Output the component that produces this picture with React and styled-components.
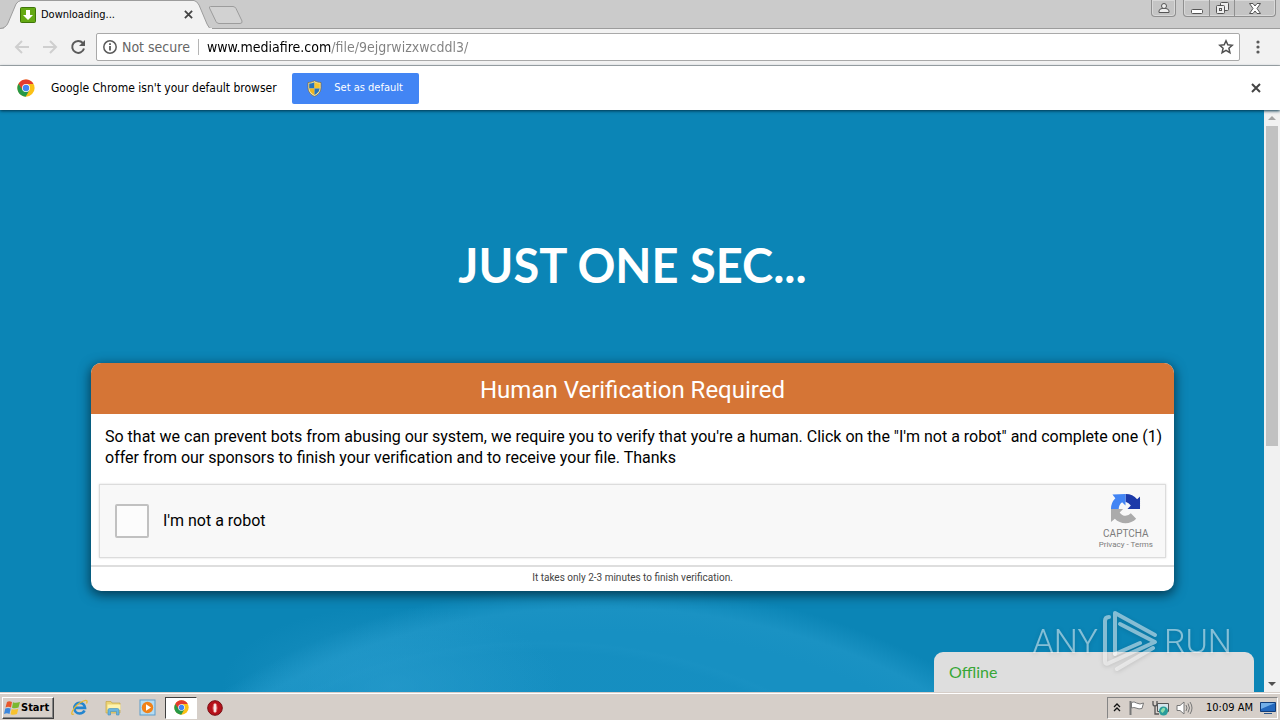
import React from "react";
import styled, { createGlobalStyle } from "styled-components";

const ui = `"DejaVu Sans Condensed", "Noto Sans", sans-serif`;

const GlobalStyle = createGlobalStyle`
  * { box-sizing: border-box; }
  body { margin: 0; font-family: Roboto, sans-serif; color: #000; }
  button, input { font: inherit; color: inherit; }
  button { padding: 0; border: 0; background: none; cursor: pointer; }
  svg { display: block; flex: none; }
`;

const Desktop = styled.div`
  display: flex;
  flex-direction: column;
  min-height: 100vh;
  overflow: hidden;
`;

const TabStrip = styled.div`
  display: flex;
  align-items: flex-start;
  justify-content: space-between;
  height: 29px;
  background: #cbcbcb;
  border-bottom: 1px solid #9c9c9c;
`;

const Tabs = styled.div`
  display: flex;
  align-items: flex-start;
`;

const Tab = styled.div`
  position: relative;
  display: flex;
  align-items: center;
  gap: 5px;
  width: 208px;
  height: 29px;
  padding: 0 12px 0 20px;
  font: 11px/16px ${ui};
`;

const TabShape = styled.svg`
  position: absolute;
  inset: 0;
  z-index: 0;
`;

const TabTitle = styled.span`
  position: relative;
  flex: 1;
`;

const TabIcon = styled.svg`
  position: relative;
`;

const IconButton = styled.button`
  position: relative;
  display: grid;
  place-items: center;
  width: ${(p) => p.$w || 16}px;
  height: ${(p) => p.$h || 16}px;
`;

const WindowButtons = styled.div`
  display: flex;
  gap: 7px;
  padding-right: 4px;
`;

const ButtonGroup = styled.div`
  display: flex;
  height: 17px;
  border: 1px solid #8f8f8f;
  border-top: 0;
  border-radius: 0 0 4px 4px;
  background: #c4c4c4;
  box-shadow: inset 0 0 0 1px #d8d8d8;
`;

const WindowButton = styled.button`
  display: grid;
  place-items: center;
  width: ${(p) => p.$w}px;
  & + & { border-left: 1px solid #8f8f8f; }
`;

const Toolbar = styled.div`
  display: flex;
  align-items: center;
  height: 37px;
  padding: 0 14px;
  background: #f2f2f2;
  border-bottom: 1px solid #b3b3b3;
`;

const NavButtons = styled.div`
  display: flex;
  gap: 12px;
  margin-right: 10px;
`;

const AddressBar = styled.form`
  display: flex;
  flex: 1;
  align-items: center;
  height: 28px;
  margin-right: 10px;
  padding: 0 5px;
  border: 1px solid #a9a9a9;
  border-radius: 2px;
  background: #fff;
  font: 14px/20px ${ui};
`;

const Security = styled.span`
  margin-left: 4px;
  padding-right: 8px;
  border-right: 1px solid #b5b5b5;
  color: #666;
  line-height: 16px;
`;

const Address = styled.input`
  flex: 1;
  min-width: 0;
  margin-left: 8px;
  padding: 0;
  border: 0;
  outline: 0;
  color: #222;
  background: linear-gradient(90deg, #000 124px, #808080 124px);
  background-clip: text;
  -webkit-text-fill-color: transparent;
`;

const InfoBar = styled.div`
  position: relative;
  z-index: 1;
  display: flex;
  align-items: center;
  height: 44px;
  padding: 0 16px 0 17px;
  background: #fff;
  box-shadow: 0 1px 3px #00334a;
  font: 12px/16px ${ui};
`;

const InfoText = styled.span`
  margin: 0 15px 0 16px;
`;

const DefaultButton = styled.button`
  display: flex;
  align-items: center;
  justify-content: center;
  gap: 12px;
  width: 127px;
  height: 31px;
  border-radius: 2px;
  background: #4285f4;
  color: #fff;
  font-size: 11px;
`;

const Spacer = styled.span`
  flex: 1;
`;

const Viewport = styled.div`
  position: relative;
  display: flex;
  flex: 1;
`;

const Page = styled.main`
  flex: 1;
  min-width: 0;
  padding: 128px 90px 0 91px;
  background:
    radial-gradient(ellipse 170px 80px at 31% 99%, #2a9dce99, #2a9dce00),
    radial-gradient(ellipse 420px 300px at calc(50% - 92px) calc(100% + 248px), #0b85b922 96%, #2197c822 99%, #2197c800 100%),
    radial-gradient(ellipse 553px 396px at calc(50% - 32px) calc(100% + 288px), #1790c2 88%, #1a92c3 94%, #1790c200 100%),
    #0b85b6;
`;

const Heading = styled.h1`
  margin: 0 0 71px;
  color: #fff;
  font: 700 47px/54px Lato, sans-serif;
  text-align: center;
`;

const Card = styled.section`
  overflow: hidden;
  border-radius: 10px;
  background: #fff;
  box-shadow: 0 3px 12px 1px #043a52;
`;

const CardTitle = styled.h2`
  margin: 0;
  padding: 13px 0 10px;
  background: #d57536;
  color: #fff;
  font-size: 24px;
  font-weight: 400;
  line-height: 28px;
  text-align: center;
`;

const CardText = styled.p`
  margin: 0;
  padding: 12px 6px 16px 14px;
  font-size: 16px;
  line-height: 21px;
`;

const Captcha = styled.div`
  display: flex;
  align-items: center;
  justify-content: space-between;
  height: 74px;
  margin: 0 8px 7px;
  padding: 0 12px 0 15px;
  border: 1px solid #dcdcdc;
  background: #f8f8f8;
  box-shadow: 0 0 2px #d8d8d8;
`;

const RobotLabel = styled.label`
  display: flex;
  align-items: center;
  gap: 14px;
  font-size: 16px;
  line-height: 20px;
`;

const RobotCheck = styled.input`
  appearance: none;
  width: 34px;
  height: 34px;
  margin: 0;
  border: 2px solid #c1c1c1;
  border-radius: 2px;
  background: #fcfcfc;
`;

const CaptchaBrand = styled.div`
  display: flex;
  flex-direction: column;
  align-items: center;
  color: #7c7c7c;
  font-size: 10px;
  line-height: 12px;
`;

const BrandName = styled.span`
  margin-top: 4px;
`;

const BrandLinks = styled.span`
  font-size: 8px;
  line-height: 10px;
  a { color: inherit; text-decoration: none; }
`;

const CardFooter = styled.footer`
  height: 26px;
  border-top: 2px solid #dedede;
  color: #444;
  font-size: 10px;
  line-height: 22px;
  text-align: center;
`;

const Scrollbar = styled.div`
  display: flex;
  flex-direction: column;
  align-items: center;
  width: 16px;
  background: #f1f1f1;
`;

const ScrollThumb = styled.div`
  flex: 0 1 320px;
  width: 12px;
  margin-bottom: auto;
  background: #c1c1c1;
`;

const ChatBox = styled.button`
  position: absolute;
  right: 26px;
  bottom: 0;
  width: 320px;
  height: 40px;
  padding: 0 15px;
  border-radius: 9px 9px 0 0;
  background: #dedede;
  color: #37a637;
  font: 16px/20px Lato, sans-serif;
  text-align: left;
`;

const Watermark = styled.div`
  position: absolute;
  right: 48px;
  bottom: 18px;
  display: flex;
  align-items: center;
  gap: 4px;
  color: #ffffff80;
  font: 300 34px/66px Roboto, sans-serif;
  filter: drop-shadow(0 1px 2px #0004);
  pointer-events: none;
`;

const Taskbar = styled.footer`
  display: flex;
  align-items: center;
  height: 28px;
  padding-left: 2px;
  border-top: 1px solid #d6cec8;
  background: #d6cfc9;
  box-shadow: inset 0 1px #fff;
  font: 11px/16px ${ui};
`;

const StartButton = styled.button`
  display: flex;
  align-items: center;
  gap: 1px;
  width: 52px;
  height: 22px;
  margin: 2px 9px 0 0;
  padding-left: 1px;
  border: 1px solid;
  border-color: #fff #404040 #404040 #fff;
  box-shadow: inset -1px -1px #858585;
  font-weight: 700;
`;

const TaskButton = styled.button`
  display: grid;
  place-items: center;
  width: 32px;
  height: 22px;
  margin: 2px 2px 0 0;
  border: 1px solid;
  border-color: ${(p) => (p.$active ? "#404040 #fff #fff #404040" : "transparent")};
  background: ${(p) => (p.$active ? "#fff" : "none")};
`;

const Tray = styled.div`
  display: flex;
  align-items: center;
  gap: 7px;
  height: 22px;
  margin: 2px 2px 0 0;
  padding: 0 1px 0 5px;
  border: 1px solid;
  border-color: #858585 #fff #fff #858585;
`;

const Clock = styled.time`
  margin-left: 6px;
`;

const ChromeLogo = ({ size = 17 }) => (
  <svg width={size} height={size} viewBox="0 0 48 48" aria-hidden="true">
    <circle cx="24" cy="24" r="23" fill="#fbc116" />
    <path d="M4 12.5A23 23 0 0 1 44 13H24L14 30Z" fill="#e33b2e" />
    <path d="M4 12.5A23 23 0 0 0 23 47L33 30 15 29Z" fill="#279847" />
    <circle cx="24" cy="24" r="10.5" fill="#fff" />
    <circle cx="24" cy="24" r="8.5" fill="#4285f4" />
  </svg>
);

const Cross = ({ size = 9 }) => (
  <svg width={size} height={size} viewBox="0 0 10 10" stroke="#444" strokeWidth="2">
    <path d="M1 1l8 8M9 1L1 9" />
  </svg>
);

const Shield = () => (
  <svg width="15" height="17" viewBox="0 0 15 17">
    <path d="M7.500 .8C5.500 2 3 2.500 1 2.500V7.500C1 12 4 15 7.500 16.300 11 15 14 12 14 7.500V2.500C12 2.500 9.500 2 7.500 .8Z" fill="#f5e9a8" stroke="#79663b" strokeWidth=".7" />
    <path d="M7.500 2.300Q5 3.500 2.200 3.600V8.500H7.500Z" fill="#2572bd" />
    <path d="M7.500 2.300Q10 3.500 12.800 3.600V8.500H7.500Z" fill="#f4c431" />
    <path d="M2.300 8.500H7.500V14.900Q3 13 2.300 8.500Z" fill="#efb51e" />
    <path d="M12.700 8.500H7.500V14.900Q12 13 12.700 8.500Z" fill="#2572bd" />
  </svg>
);

const CaptchaLogo = () => (
  <svg width="31" height="31" viewBox="0 0 64 64">
    <path d="M32 2A30 30 0 0 1 56 13L62 7V33H36L43 26Q39 20 32 18Z" fill="#1c3aa9" />
    <path d="M32 2V26L25 19Q18 24 18 33H2Q2 20 11 11L5 3Z" fill="#4285f4" />
    <path d="M2 33H27L20 40Q25 47 32 47 39 47 43 42L54 53A30 30 0 0 1 10 53L2 60Z" fill="#ababab" />
  </svg>
);

const AnyRunMark = () => (
  <svg width="58" height="64" viewBox="0 0 58 64" fill="none" stroke="#ffffff80" strokeWidth="4" strokeLinejoin="round" strokeLinecap="round">
    <path d="M7 8Q3 8 3 12V52Q3 56 7 54L53 33 18 15" />
    <path d="M13 45V4L53 26" />
    <path d="M13 45L38 34M15 60L51 39" />
  </svg>
);

export default function App() {
  return (
    <>
      <GlobalStyle />
      <Desktop>
        <TabStrip>
          <Tabs>
            <Tab>
              <TabShape width="212" height="29" viewBox="0 0 212 29">
                <path d="M0 28.500Q6 28 8 23L16 4Q18 1 21 .5H194Q197 1 199 5L207 24Q209 29 212 29H0Z" fill="#f2f2f2" stroke="#9c9c9c" />
                <path d="M4 29H212" stroke="#f2f2f2" strokeWidth="2" />
              </TabShape>
              <TabIcon width="16" height="16" viewBox="0 0 16 16">
                <rect x=".5" y=".5" width="15" height="15" rx="1" fill="#64a913" stroke="#3e7509" />
                <path d="M6 3h4v5h3l-5 5-5-5h3Z" fill="#fff" />
              </TabIcon>
              <TabTitle>Downloading...</TabTitle>
              <IconButton aria-label="Close tab"><Cross /></IconButton>
            </Tab>
            <IconButton $w={36} $h={30} aria-label="New tab">
              <svg width="36" height="18" viewBox="0 0 36 18">
                <path d="M2.500 .5H25Q27 .5 28 2.500L34 15Q34.500 17.500 32 17.500H11Q9 17.500 8 15.500L1.500 2Q1 .5 2.500 .5Z" fill="#d2d2d2" stroke="#9c9c9c" />
              </svg>
            </IconButton>
          </Tabs>
          <WindowButtons>
            <ButtonGroup>
              <WindowButton $w={23} aria-label="Profile">
                <svg width="12" height="12" viewBox="0 0 12 12" fill="#eee" stroke="#555">
                  <path d="M1 10.500V9Q1 7 4 6.500H8Q11 7 11 9V10.500Z" /><circle cx="6" cy="4" r="2.500" />
                </svg>
              </WindowButton>
            </ButtonGroup>
            <ButtonGroup>
              <WindowButton $w={25} aria-label="Minimize">
                <svg width="12" height="12" viewBox="0 0 12 12"><rect x=".5" y="7.500" width="11" height="4" rx="1" fill="#fff" stroke="#555" /></svg>
              </WindowButton>
              <WindowButton $w={25} aria-label="Restore">
                <svg width="13" height="13" viewBox="0 0 13 13" fill="#eee" stroke="#555">
                  <rect x="4.500" y=".5" width="8" height="8" rx="1" /><rect x=".5" y="3.500" width="8" height="8" rx="1" /><rect x="3.500" y="6.500" width="2" height="2" />
                </svg>
              </WindowButton>
              <WindowButton $w={41} aria-label="Close">
                <svg width="12" height="11" viewBox="0 0 12 11" fill="#fff" stroke="#555">
                  <path d="M.5 .5H4L6 3 8 .5H11.500L8 5.500 11.500 10.500H8L6 8 4 10.500H.5L4 5.500Z" />
                </svg>
              </WindowButton>
            </ButtonGroup>
          </WindowButtons>
        </TabStrip>

        <Toolbar>
          <NavButtons>
            <IconButton aria-label="Back">
              <svg width="16" height="16" viewBox="0 0 16 16" fill="none" stroke="#cfcfcf" strokeWidth="2"><path d="M15 8H2M8 2L2 8l6 6" /></svg>
            </IconButton>
            <IconButton aria-label="Forward">
              <svg width="16" height="16" viewBox="0 0 16 16" fill="none" stroke="#cfcfcf" strokeWidth="2"><path d="M1 8h13M8 2l6 6-6 6" /></svg>
            </IconButton>
            <IconButton aria-label="Reload">
              <svg width="16" height="16" viewBox="0 0 16 16"><path d="M12.800 4A6 6 0 1 0 14 9.500" fill="none" stroke="#5a5a5a" strokeWidth="2" /><path d="M15 1v6H9Z" fill="#5a5a5a" /></svg>
            </IconButton>
          </NavButtons>
          <AddressBar onSubmit={(e) => e.preventDefault()}>
            <svg width="16" height="16" viewBox="0 0 16 16"><circle cx="8" cy="8" r="6.200" fill="none" stroke="#5a5a5a" strokeWidth="1.500" /><path d="M7.100 7h1.800v4.500H7.100ZM7.100 4.300h1.800V6H7.100Z" fill="#5a5a5a" /></svg>
            <Security>Not secure</Security>
            <Address aria-label="Address" defaultValue="www.mediafire.com/file/9ejgrwizxwcddl3/" />
            <IconButton type="button" aria-label="Bookmark this page">
              <svg width="16" height="16" viewBox="0 0 16 16"><path d="M8 1.800l1.800 4 4.400.5-3.300 2.900 1 4.400L8 11.300l-3.900 2.300 1-4.400-3.300-2.900 4.400-.5Z" fill="none" stroke="#505050" strokeWidth="1.500" /></svg>
            </IconButton>
          </AddressBar>
          <IconButton aria-label="Menu">
            <svg width="4" height="14" viewBox="0 0 4 14" fill="#5a5a5a"><circle cx="2" cy="2" r="1.600" /><circle cx="2" cy="7" r="1.600" /><circle cx="2" cy="12" r="1.600" /></svg>
          </IconButton>
        </Toolbar>

        <InfoBar>
          <ChromeLogo size={18} />
          <InfoText>Google Chrome isn't your default browser</InfoText>
          <DefaultButton><Shield />Set as default</DefaultButton>
          <Spacer />
          <IconButton aria-label="Dismiss"><Cross size={10} /></IconButton>
        </InfoBar>

        <Viewport>
          <Page>
            <Heading>JUST ONE SEC...</Heading>
            <Card>
              <CardTitle>Human Verification Required</CardTitle>
              <CardText>
                So that we can prevent bots from abusing our system, we require you to verify that you're a human. Click on the "I'm not a robot" and complete one (1) offer from our sponsors to finish your verification and to receive your file. Thanks
              </CardText>
              <Captcha>
                <RobotLabel><RobotCheck type="checkbox" />I'm not a robot</RobotLabel>
                <CaptchaBrand>
                  <CaptchaLogo />
                  <BrandName>CAPTCHA</BrandName>
                  <BrandLinks><a href="#privacy">Privacy</a> - <a href="#terms">Terms</a></BrandLinks>
                </CaptchaBrand>
              </Captcha>
              <CardFooter>It takes only 2-3 minutes to finish verification.</CardFooter>
            </Card>
          </Page>
          <Scrollbar>
            <IconButton aria-label="Scroll up"><svg width="8" height="4" viewBox="0 0 8 4"><path d="M0 4l4-4 4 4Z" fill="#a3a3a3" /></svg></IconButton>
            <ScrollThumb />
            <IconButton aria-label="Scroll down"><svg width="8" height="4" viewBox="0 0 8 4"><path d="M0 0h8L4 4Z" fill="#505050" /></svg></IconButton>
          </Scrollbar>
          <ChatBox>Offline</ChatBox>
          <Watermark><span>ANY</span><AnyRunMark /><span>RUN</span></Watermark>
        </Viewport>

        <Taskbar>
          <StartButton>
            <svg width="16" height="16" viewBox="0 0 16 16">
              <path d="M3 2Q5 .5 8 2L7 7.500Q4 6 1.500 7.500Z" fill="#e8572a" />
              <path d="M9 2.300Q12 3.500 16 2L14.500 7.500Q11 9 8 7.800Z" fill="#7ab82f" />
              <path d="M1.300 8.500Q4 7.300 6.700 8.500L5.500 14Q3 12.500 0 14Z" fill="#3b87dd" />
              <path d="M7.700 8.900Q10.500 10 14.300 8.700L13 14Q9.500 15.500 6.600 14.300Z" fill="#f8c22e" />
            </svg>
            Start
          </StartButton>
          <TaskButton aria-label="Internet Explorer">
            <svg width="17" height="17" viewBox="0 0 17 17" fill="none">
              <path d="M13.500 11.500Q12 14.500 8.500 14.500A5.300 5.300 0 1 1 14 8.800H4.500" stroke="#2385cf" strokeWidth="2.700" />
              <path d="M3 15Q-.5 16.500 1.500 12 5 5 12.500 2 17.500 .2 15.500 4.500" stroke="#e9b92e" strokeWidth="1.300" />
            </svg>
          </TaskButton>
          <TaskButton aria-label="File Explorer">
            <svg width="17" height="17" viewBox="0 0 17 17">
              <path d="M1 2.500h5l1 1.500h8v10H1Z" fill="#ecd373" stroke="#c7a645" strokeWidth=".7" />
              <path d="M2.500 5.500h13V11h-13Z" fill="#fff3ad" />
              <path d="M3 16v-5q0-1.500 1.500-1.500h8Q14 9.500 14 11v5h-2.500v-3.500h-6V16Z" fill="#6bb5df" stroke="#428ebc" strokeWidth=".6" />
            </svg>
          </TaskButton>
          <TaskButton aria-label="Media Player">
            <svg width="17" height="17" viewBox="0 0 17 17">
              <rect x="1" y="1" width="15" height="15" fill="#b6dcf2" stroke="#5c9dcc" />
              <circle cx="8.500" cy="8.500" r="5.700" fill="#f08219" /><path d="M7 5.200v6.600l5-3.300Z" fill="#fff" />
            </svg>
          </TaskButton>
          <TaskButton $active aria-label="Google Chrome"><ChromeLogo size={15} /></TaskButton>
          <TaskButton aria-label="Opera">
            <svg width="16" height="16" viewBox="0 0 16 16"><circle cx="8" cy="8" r="7.300" fill="#b5121b" stroke="#780d12" /><ellipse cx="8" cy="8" rx="2" ry="4.800" fill="#f7e8e8" stroke="#df6262" /></svg>
          </TaskButton>
          <Spacer />
          <Tray>
            <svg width="8" height="11" viewBox="0 0 8 11" fill="none" stroke="#111" strokeWidth="1.300"><path d="M1 5l3-3 3 3M1 9l3-3 3 3" /></svg>
            <svg width="17" height="16" viewBox="0 0 17 16" fill="#fff" stroke="#777"><path d="M2.500 1v14" strokeWidth="2" /><path d="M3.500 2.500Q6 1 8.500 3 12 5 15.500 3L14 8.500Q11 9.500 8 8 6 7 3.500 8Z" /></svg>
            <svg width="17" height="16" viewBox="0 0 17 16"><path d="M5.500 3.500h11v8h-11Z" fill="#d4e4ea" stroke="#555" /><path d="M1 1v3q0 2 2 2t2-2V1M3 6v8h4" fill="none" stroke="#555" strokeWidth="1.300" /><circle cx="11.500" cy="11" r="4.500" fill="#299d9a" /><path d="M8.500 11q2-4 4-3t-2 5Z" fill="#8fdbab" /></svg>
            <svg width="17" height="16" viewBox="0 0 17 16" fill="none" stroke="#777"><path d="M1 5.500h3L8 2v12l-4-3.500H1Z" fill="#fff" /><path d="M10 5q2 3 0 6M12 3.500q3 4.500 0 9M14 2q4 6 0 12" /></svg>
            <Clock>10:09 AM</Clock>
            <svg width="16" height="14" viewBox="0 0 16 14"><path d="M.5 1.500h15v9H.5Z" fill="#2468bd" stroke="#123d79" /><path d="M1 2h14L1 8Z" fill="#72aee8" /><path d="M4 12.500h8" stroke="#29558b" /></svg>
          </Tray>
        </Taskbar>
      </Desktop>
    </>
  );
}
